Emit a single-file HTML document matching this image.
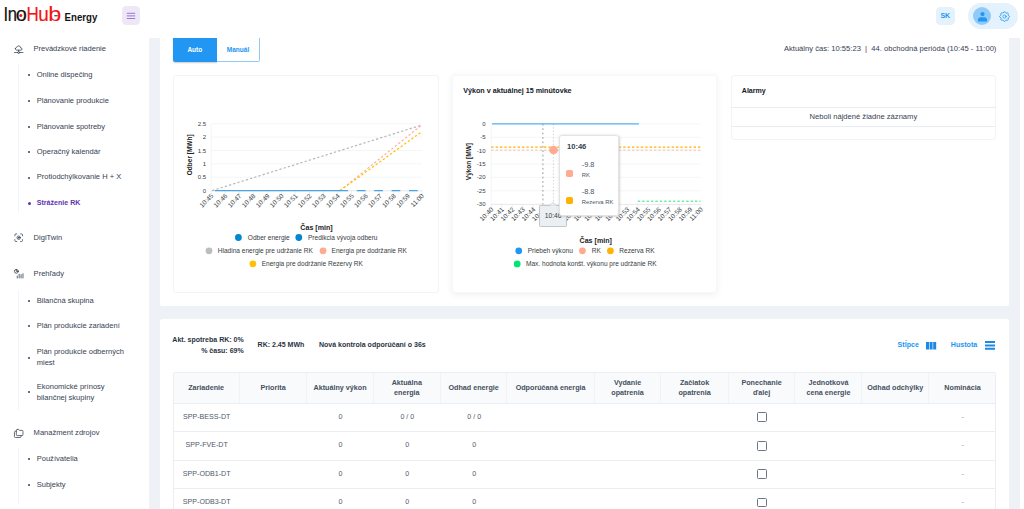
<!DOCTYPE html>
<html lang="sk">
<head>
<meta charset="utf-8">
<title>InoHub Energy</title>
<style>
*{box-sizing:border-box;margin:0;padding:0}
html,body{width:1024px;height:509px;overflow:hidden;background:#fff}
body{font-family:"Liberation Sans",sans-serif;color:#364152;position:relative;font-size:7.5px}
.abs{position:absolute}
.t{position:absolute;white-space:nowrap;line-height:10px;transform:translateY(-50%)}
#main{position:absolute;left:148.6px;top:38px;width:871.7px;height:471px;background:#eef2f6}
.card{position:absolute;background:#fff}
.side .t{font-size:7.55px;color:#364152}
.side .dot{position:absolute;width:2px;height:2px;border-radius:50%;background:#364152;left:28px}
.box{position:absolute;border:1px solid #f2f4f8;border-radius:3px;background:#fff}
svg{position:absolute;overflow:visible}
svg text{font-family:"Liberation Sans",sans-serif}
.th{position:absolute;top:0;height:29.8px;border-right:1px solid #f0f2f5;display:flex;align-items:center;justify-content:center;text-align:center;font-weight:bold;font-size:7.2px;line-height:10.4px;color:#465060}
.td{position:absolute;font-size:7.1px;color:#4f5969;transform:translate(-50%,-50%);white-space:nowrap}
.rowline{position:absolute;left:0;width:822.3px;height:1px;background:#eaeef2}
.cb{position:absolute;width:9.8px;height:9.9px;border:1.1px solid #6b7689;border-radius:1.4px;left:759.2px}
</style>
</head>
<body>
<!-- HEADER -->
<div id="header" class="abs" style="left:0;top:0;width:1024px;height:38px;background:#fff">
  <svg id="logo" width="110" height="32" style="left:0;top:0">
    <text transform="translate(3.46,21) scale(.8,1)" font-size="20.7" fill="#111" stroke="#111" stroke-width="0.2">I</text>
    <text transform="translate(7.71,21) scale(.8,1)" font-size="20.7" fill="#111" stroke="#111" stroke-width="0.2">n</text>
    <text transform="translate(15.78,21) scale(.96,1)" font-size="20.7" fill="#111" stroke="#111" stroke-width="0.2">o</text>
    <text transform="translate(26.54,21) scale(.817,1)" font-size="20.7" fill="#f41414" stroke="#f41414" stroke-width="0.2">H</text>
    <text transform="translate(38.2,21) scale(.91,1)" font-size="20.7" fill="#f41414" stroke="#f41414" stroke-width="0.2">u</text>
    <text transform="translate(48.3,21) scale(1.13,1)" font-size="20.7" fill="#f41414" stroke="#f41414" stroke-width="0.05">b</text>
    <circle cx="20.8" cy="15.6" r="1.5" fill="#f41414"/>
    <rect x="54.2" y="15.2" width="3.5" height="1.1" fill="#333"/>
    <text x="64.6" y="20.9" font-size="10.9" font-weight="bold" fill="#151515" textLength="32.8" lengthAdjust="spacingAndGlyphs">Energy</text>
  </svg>
  <div class="abs" style="left:121.6px;top:6.4px;width:18.6px;height:18.7px;border-radius:4.4px;background:#ede7f6"></div>
  <svg width="10" height="8" style="left:125.9px;top:12px" viewBox="0 0 10 8"><path d="M1.2 1.3h7.6M1.2 3.9h7.6M1.2 6.5h7.6" stroke="#6f48bb" stroke-width="0.68" fill="none" stroke-linecap="round"/></svg>
  <div class="abs" style="left:936px;top:6.9px;width:18.6px;height:18.4px;border-radius:4.4px;background:#e3f2fd"></div>
  <div class="t" style="left:945.3px;top:16.2px;transform:translate(-50%,-50%);font-size:7px;font-weight:bold;color:#2196f3">SK</div>
  <div class="abs" style="left:967.9px;top:2.9px;width:50.1px;height:26.4px;border-radius:13.2px;background:#e3f2fd"></div>
  <div class="abs" style="left:972.9px;top:7.1px;width:18.2px;height:18.2px;border-radius:50%;background:#90caf9"></div>
  <svg width="13" height="13" style="left:975.5px;top:9.6px" viewBox="0 0 24 24"><circle cx="12" cy="7.6" r="3.9" fill="#2196f3"/><path d="M3.6 21.2v-2.600c0-2.800 2.200-5 5-5h6.800c2.800 0 5 2.200 5 5v2.600z" fill="#2196f3"/></svg>
  <svg width="13.1" height="13.1" style="left:997.85px;top:9.65px" viewBox="0 0 24 24" fill="none" stroke="#2196f3" stroke-width="1.5" stroke-linecap="round" stroke-linejoin="round"><path d="M10.325 4.317c.426 -1.756 2.924 -1.756 3.35 0a1.724 1.724 0 0 0 2.573 1.066c1.543 -.94 3.31 .826 2.37 2.37a1.724 1.724 0 0 0 1.065 2.572c1.756 .426 1.756 2.924 0 3.35a1.724 1.724 0 0 0 -1.066 2.573c.94 1.543 -.826 3.31 -2.37 2.37a1.724 1.724 0 0 0 -2.572 1.065c-.426 1.756 -2.924 1.756 -3.35 0a1.724 1.724 0 0 0 -2.573 -1.066c-1.543 .94 -3.31 -.826 -2.37 -2.37a1.724 1.724 0 0 0 -1.065 -2.572c-1.756 -.426 -1.756 -2.924 0 -3.35a1.724 1.724 0 0 0 1.066 -2.573c-.94 -1.543 .826 -3.31 2.37 -2.37c1 .608 2.296 .07 2.572 -1.065z"/><circle cx="12" cy="12" r="3"/></svg>
</div>

<!-- SIDEBAR -->
<div id="sidebar" class="abs side" style="left:0;top:38px;width:148.6px;height:471px;background:#fff">
  <div class="abs" style="left:18.3px;top:25.8px;width:1px;height:149.7px;background:#f0f5fc"></div>
  <div class="abs" style="left:18.3px;top:251.8px;width:1px;height:119.8px;background:#f0f5fc"></div>
  <div class="abs" style="left:18.3px;top:409.9px;width:1px;height:56px;background:#f0f5fc"></div>
  <svg width="11.4" height="11.4" style="left:13.1px;top:5.7px" viewBox="0 0 24 24" fill="none" stroke="#364152" stroke-width="1.6" stroke-linecap="round" stroke-linejoin="round"><path d="M5 9.897c0 -1.714 1.460 -3.104 3.260 -3.104c.275 -1.220 1.255 -2.215 2.572 -2.611c1.317 -.397 2.770 -.134 3.811 .690c1.042 .822 1.514 2.080 1.239 3.300h.693a2.420 2.420 0 0 1 2.425 2.414a2.420 2.420 0 0 1 -2.425 2.414h-8.315c-1.800 0 -3.260 -1.390 -3.260 -3.103z"/><path d="M12 13v3"/><circle cx="12" cy="18" r="2"/><path d="M14 18h7"/><path d="M3 18h7"/></svg>
  <div class="t" style="left:33.4px;top:10.7px">Prevádzkové riadenie</div>
  <div class="dot" style="top:36px"></div><div class="t" style="left:36.7px;top:36.8px">Online dispečing</div>
  <div class="dot" style="top:62px"></div><div class="t" style="left:36.7px;top:62.8px">Plánovanie produkcie</div>
  <div class="dot" style="top:87.8px"></div><div class="t" style="left:36.7px;top:88.6px">Plánovanie spotreby</div>
  <div class="dot" style="top:112.9px"></div><div class="t" style="left:36.7px;top:113.7px">Operačný kalendár</div>
  <div class="dot" style="top:138.6px"></div><div class="t" style="left:36.7px;top:139.4px">Protiodchýlkovanie H + X</div>
  <div class="dot" style="top:163.8px;left:27.5px;width:3px;height:3px;background:#5e35b1"></div><div class="t" style="left:36.7px;top:165.1px;color:#5e35b1;font-weight:bold;font-size:7.1px">Stráženie RK</div>
  <svg width="11.4" height="11.4" style="left:13.1px;top:194.4px" viewBox="0 0 24 24" fill="none" stroke="#364152" stroke-width="1.6" stroke-linecap="round" stroke-linejoin="round"><path d="M4 8v-2a2 2 0 0 1 2 -2h2"/><path d="M4 16v2a2 2 0 0 0 2 2h2"/><path d="M16 4h2a2 2 0 0 1 2 2v2"/><path d="M16 20h2a2 2 0 0 0 2 -2v-2"/><circle cx="12" cy="12" r="3.6"/><circle cx="12" cy="12" r="1" fill="#364152"/></svg>
  <div class="t" style="left:33.6px;top:199.8px">DigiTwin</div>
  <svg width="11.4" height="11.4" style="left:12.6px;top:230.2px" viewBox="0 0 24 24" fill="none" stroke="#364152" stroke-width="1.7" stroke-linecap="round" stroke-linejoin="round"><circle cx="7" cy="7" r="4"/><path d="M7 3v4h4"/><path d="M9 17v4"/><path d="M17 14v7"/><path d="M13 13v8"/><path d="M21 12v9"/></svg>
  <div class="t" style="left:33.6px;top:236.2px">Prehľady</div>
  <div class="dot" style="top:262.1px"></div><div class="t" style="left:36.7px;top:262.9px">Bilančná skupina</div>
  <div class="dot" style="top:286.7px"></div><div class="t" style="left:36.7px;top:287.5px">Plán produkcie zariadení</div>
  <div class="dot" style="top:318.5px"></div><div class="t" style="left:36.7px;top:314.3px">Plán produkcie odberných</div><div class="t" style="left:36.7px;top:324.6px">miest</div>
  <div class="dot" style="top:353px"></div><div class="t" style="left:36.7px;top:348.9px">Ekonomické prínosy</div><div class="t" style="left:36.7px;top:359.6px">bilančnej skupiny</div>
  <svg width="11.4" height="11.4" style="left:13.4px;top:389.8px" viewBox="0 0 24 24" fill="none" stroke="#364152" stroke-width="1.6" stroke-linecap="round" stroke-linejoin="round"><path d="M9 3h3l2 2h5a2 2 0 0 1 2 2v7a2 2 0 0 1 -2 2h-10a2 2 0 0 1 -2 -2v-9a2 2 0 0 1 2 -2"/><path d="M17 16v2a2 2 0 0 1 -2 2h-10a2 2 0 0 1 -2 -2v-9a2 2 0 0 1 2 -2h2"/></svg>
  <div class="t" style="left:33.6px;top:395.4px">Manažment zdrojov</div>
  <div class="dot" style="top:420.4px"></div><div class="t" style="left:36.7px;top:421.2px">Používatelia</div>
  <div class="dot" style="top:446.1px"></div><div class="t" style="left:36.7px;top:446.9px">Subjekty</div>
</div>

<!-- MAIN -->
<div id="main">
  <div id="card1" class="card" style="left:11px;top:-6px;width:849.4px;height:273.7px;border-radius:2.6px"></div>
  <div id="card2" class="card" style="left:11px;top:280.9px;width:849.4px;height:200px;border-radius:2.6px"></div>
</div>
<div class="abs" style="left:173.2px;top:36px;width:43.6px;height:25.5px;background:#2196f3;border-radius:2.3px 0 0 2.3px;box-shadow:0 1px 1.6px rgba(0,0,0,.2)"></div>
<div class="abs" style="left:216.8px;top:36px;width:42.9px;height:25.5px;border:1px solid #90caf9;border-left:0;border-radius:0 2.3px 2.3px 0;background:#fff"></div>
<div class="abs" style="left:148.6px;top:30px;width:875.4px;height:8px;background:#fff"></div>
<div class="t" style="left:194.8px;top:49.6px;transform:translate(-50%,-50%);font-size:6.5px;font-weight:bold;color:#fff">Auto</div>
<div class="t" style="left:238px;top:49.6px;transform:translate(-50%,-50%);font-size:6.5px;font-weight:bold;color:#2196f3">Manuál</div>
<div class="t" style="left:783.9px;top:49.4px;font-size:7.61px;color:#364152">Aktuálny čas: 10:55:23 &nbsp;|&nbsp; 44. obchodná perióda (10:45 - 11:00)</div>

<div class="box" style="left:173px;top:74.5px;width:265.9px;height:218.8px"></div>
<svg width="1024" height="509" style="left:0;top:0" viewBox="0 0 1024 509">
<line x1="211.2" y1="190.6" x2="421.8" y2="190.6" stroke="#eceef0" stroke-width="0.6"/>
<text x="206.2" y="192.6" font-size="6.05" fill="#373d3f" text-anchor="end">0</text>
<line x1="211.2" y1="177.2" x2="421.8" y2="177.2" stroke="#eceef0" stroke-width="0.6"/>
<text x="206.2" y="179.2" font-size="6.05" fill="#373d3f" text-anchor="end">0.5</text>
<line x1="211.2" y1="163.8" x2="421.8" y2="163.8" stroke="#eceef0" stroke-width="0.6"/>
<text x="206.2" y="165.8" font-size="6.05" fill="#373d3f" text-anchor="end">1</text>
<line x1="211.2" y1="150.5" x2="421.8" y2="150.5" stroke="#eceef0" stroke-width="0.6"/>
<text x="206.2" y="152.5" font-size="6.05" fill="#373d3f" text-anchor="end">1.5</text>
<line x1="211.2" y1="137.1" x2="421.8" y2="137.1" stroke="#eceef0" stroke-width="0.6"/>
<text x="206.2" y="139.1" font-size="6.05" fill="#373d3f" text-anchor="end">2</text>
<line x1="211.2" y1="123.7" x2="421.8" y2="123.7" stroke="#eceef0" stroke-width="0.6"/>
<text x="206.2" y="125.7" font-size="6.05" fill="#373d3f" text-anchor="end">2.5</text>
<line x1="211.2" y1="123.7" x2="211.2" y2="190.6" stroke="#eceef0" stroke-width="0.6"/>
<line x1="211.2" y1="190.9" x2="421.8" y2="190.9" stroke="#e0e3e6" stroke-width="0.6"/>
<line x1="211.2" y1="190.9" x2="211.2" y2="194.0" stroke="#e0e3e6" stroke-width="0.6"/>
<text transform="translate(213.8,196.4) rotate(-45)" font-size="6.5" fill="#373d3f" text-anchor="end">10:45</text>
<line x1="225.2" y1="190.9" x2="225.2" y2="194.0" stroke="#e0e3e6" stroke-width="0.6"/>
<text transform="translate(227.8,196.4) rotate(-45)" font-size="6.5" fill="#373d3f" text-anchor="end">10:46</text>
<line x1="239.3" y1="190.9" x2="239.3" y2="194.0" stroke="#e0e3e6" stroke-width="0.6"/>
<text transform="translate(241.9,196.4) rotate(-45)" font-size="6.5" fill="#373d3f" text-anchor="end">10:47</text>
<line x1="253.3" y1="190.9" x2="253.3" y2="194.0" stroke="#e0e3e6" stroke-width="0.6"/>
<text transform="translate(255.9,196.4) rotate(-45)" font-size="6.5" fill="#373d3f" text-anchor="end">10:48</text>
<line x1="267.4" y1="190.9" x2="267.4" y2="194.0" stroke="#e0e3e6" stroke-width="0.6"/>
<text transform="translate(270.0,196.4) rotate(-45)" font-size="6.5" fill="#373d3f" text-anchor="end">10:49</text>
<line x1="281.4" y1="190.9" x2="281.4" y2="194.0" stroke="#e0e3e6" stroke-width="0.6"/>
<text transform="translate(284.0,196.4) rotate(-45)" font-size="6.5" fill="#373d3f" text-anchor="end">10:50</text>
<line x1="295.4" y1="190.9" x2="295.4" y2="194.0" stroke="#e0e3e6" stroke-width="0.6"/>
<text transform="translate(298.0,196.4) rotate(-45)" font-size="6.5" fill="#373d3f" text-anchor="end">10:51</text>
<line x1="309.5" y1="190.9" x2="309.5" y2="194.0" stroke="#e0e3e6" stroke-width="0.6"/>
<text transform="translate(312.1,196.4) rotate(-45)" font-size="6.5" fill="#373d3f" text-anchor="end">10:52</text>
<line x1="323.5" y1="190.9" x2="323.5" y2="194.0" stroke="#e0e3e6" stroke-width="0.6"/>
<text transform="translate(326.1,196.4) rotate(-45)" font-size="6.5" fill="#373d3f" text-anchor="end">10:53</text>
<line x1="337.6" y1="190.9" x2="337.6" y2="194.0" stroke="#e0e3e6" stroke-width="0.6"/>
<text transform="translate(340.2,196.4) rotate(-45)" font-size="6.5" fill="#373d3f" text-anchor="end">10:54</text>
<line x1="351.6" y1="190.9" x2="351.6" y2="194.0" stroke="#e0e3e6" stroke-width="0.6"/>
<text transform="translate(354.2,196.4) rotate(-45)" font-size="6.5" fill="#373d3f" text-anchor="end">10:55</text>
<line x1="365.6" y1="190.9" x2="365.6" y2="194.0" stroke="#e0e3e6" stroke-width="0.6"/>
<text transform="translate(368.2,196.4) rotate(-45)" font-size="6.5" fill="#373d3f" text-anchor="end">10:56</text>
<line x1="379.7" y1="190.9" x2="379.7" y2="194.0" stroke="#e0e3e6" stroke-width="0.6"/>
<text transform="translate(382.3,196.4) rotate(-45)" font-size="6.5" fill="#373d3f" text-anchor="end">10:57</text>
<line x1="393.7" y1="190.9" x2="393.7" y2="194.0" stroke="#e0e3e6" stroke-width="0.6"/>
<text transform="translate(396.3,196.4) rotate(-45)" font-size="6.5" fill="#373d3f" text-anchor="end">10:58</text>
<line x1="407.8" y1="190.9" x2="407.8" y2="194.0" stroke="#e0e3e6" stroke-width="0.6"/>
<text transform="translate(410.4,196.4) rotate(-45)" font-size="6.5" fill="#373d3f" text-anchor="end">10:59</text>
<line x1="421.8" y1="190.9" x2="421.8" y2="194.0" stroke="#e0e3e6" stroke-width="0.6"/>
<text transform="translate(424.4,196.4) rotate(-45)" font-size="6.5" fill="#373d3f" text-anchor="end">11:00</text>
<line x1="212.2" y1="190.6" x2="421.8" y2="125.0" stroke="#b4b4b4" stroke-width="1.15" stroke-dasharray="2.3 2.1"/>
<line x1="340.0" y1="190.6" x2="421.8" y2="125.0" stroke="#ffab91" stroke-width="1.15" stroke-dasharray="2.3 2.1"/>
<line x1="340.0" y1="190.6" x2="421.8" y2="131.7" stroke="#ffc107" stroke-width="1.25" stroke-dasharray="2.3 2.1"/>
<line x1="214.9" y1="190.6" x2="340.0" y2="190.6" stroke="#48a4e4" stroke-width="1.05"/>
<line x1="339.4" y1="190.6" x2="421.8" y2="190.6" stroke="#48a4e4" stroke-width="1.05" stroke-dasharray="8.7 8.7"/>
<text transform="translate(192,154.8) rotate(-90)" font-size="6.5" font-weight="bold" fill="#222" text-anchor="middle">Odber [MWh]</text>
<text x="316.5" y="230.2" font-size="7.1" font-weight="bold" fill="#222" text-anchor="middle">Čas [min]</text>
<circle cx="238.4" cy="237.5" r="3.4" fill="#0288d1"/>
<text x="247.8" y="239.8" font-size="6.56" fill="#373d3f">Odber energie</text>
<circle cx="298.8" cy="237.5" r="3.4" fill="#0288d1"/>
<text x="308" y="239.8" font-size="6.56" fill="#373d3f">Predikcia vývoja odberu</text>
<circle cx="209" cy="250.8" r="3.4" fill="#bdbdbd"/>
<text x="217.8" y="253.1" font-size="6.56" fill="#373d3f">Hladina energie pre udržanie RK</text>
<circle cx="323" cy="250.8" r="3.4" fill="#ffab91"/>
<text x="331.6" y="253.1" font-size="6.56" fill="#373d3f">Energia pre dodržanie RK</text>
<circle cx="252.9" cy="263.8" r="3.4" fill="#ffc107"/>
<text x="261.7" y="266.1" font-size="6.56" fill="#373d3f">Energia pre dodržanie Rezervy RK</text>
</svg>
<div class="box" style="left:452.3px;top:74.5px;width:264.7px;height:218.8px;border-color:#f6f7fa;box-shadow:0 1.5px 7px rgba(32,40,45,.065)"></div>
<div class="t" style="left:463.2px;top:90.6px;font-size:7.18px;font-weight:bold;color:#121926">Výkon v aktuálnej 15 minútovke</div>
<svg width="1024" height="509" style="left:0;top:0" viewBox="0 0 1024 509">
<line x1="491.2" y1="123.9" x2="700.6" y2="123.9" stroke="#eceef0" stroke-width="0.6"/>
<text x="485.6" y="125.9" font-size="6.05" fill="#373d3f" text-anchor="end">0</text>
<line x1="491.2" y1="137.3" x2="700.6" y2="137.3" stroke="#eceef0" stroke-width="0.6"/>
<text x="485.6" y="139.3" font-size="6.05" fill="#373d3f" text-anchor="end">-5</text>
<line x1="491.2" y1="150.7" x2="700.6" y2="150.7" stroke="#eceef0" stroke-width="0.6"/>
<text x="485.6" y="152.7" font-size="6.05" fill="#373d3f" text-anchor="end">-10</text>
<line x1="491.2" y1="164.0" x2="700.6" y2="164.0" stroke="#eceef0" stroke-width="0.6"/>
<text x="485.6" y="166.0" font-size="6.05" fill="#373d3f" text-anchor="end">-15</text>
<line x1="491.2" y1="177.4" x2="700.6" y2="177.4" stroke="#eceef0" stroke-width="0.6"/>
<text x="485.6" y="179.4" font-size="6.05" fill="#373d3f" text-anchor="end">-20</text>
<line x1="491.2" y1="190.8" x2="700.6" y2="190.8" stroke="#eceef0" stroke-width="0.6"/>
<text x="485.6" y="192.8" font-size="6.05" fill="#373d3f" text-anchor="end">-25</text>
<line x1="491.2" y1="204.2" x2="700.6" y2="204.2" stroke="#eceef0" stroke-width="0.6"/>
<text x="485.6" y="206.2" font-size="6.05" fill="#373d3f" text-anchor="end">-30</text>
<line x1="491.2" y1="123.9" x2="491.2" y2="204.2" stroke="#eceef0" stroke-width="0.6"/>
<line x1="491.2" y1="204.5" x2="700.6" y2="204.5" stroke="#e0e3e6" stroke-width="0.6"/>
<line x1="491.2" y1="204.5" x2="491.2" y2="207.6" stroke="#e0e3e6" stroke-width="0.6"/>
<text transform="translate(493.8,210.0) rotate(-45)" font-size="6.5" fill="#373d3f" text-anchor="end">10:40</text>
<line x1="501.7" y1="204.5" x2="501.7" y2="207.6" stroke="#e0e3e6" stroke-width="0.6"/>
<text transform="translate(504.3,210.0) rotate(-45)" font-size="6.5" fill="#373d3f" text-anchor="end">10:41</text>
<line x1="512.1" y1="204.5" x2="512.1" y2="207.6" stroke="#e0e3e6" stroke-width="0.6"/>
<text transform="translate(514.7,210.0) rotate(-45)" font-size="6.5" fill="#373d3f" text-anchor="end">10:42</text>
<line x1="522.6" y1="204.5" x2="522.6" y2="207.6" stroke="#e0e3e6" stroke-width="0.6"/>
<text transform="translate(525.2,210.0) rotate(-45)" font-size="6.5" fill="#373d3f" text-anchor="end">10:43</text>
<line x1="533.1" y1="204.5" x2="533.1" y2="207.6" stroke="#e0e3e6" stroke-width="0.6"/>
<text transform="translate(535.7,210.0) rotate(-45)" font-size="6.5" fill="#373d3f" text-anchor="end">10:44</text>
<line x1="543.5" y1="204.5" x2="543.5" y2="207.6" stroke="#e0e3e6" stroke-width="0.6"/>
<text transform="translate(546.1,210.0) rotate(-45)" font-size="6.5" fill="#373d3f" text-anchor="end">10:45</text>
<line x1="554.0" y1="204.5" x2="554.0" y2="207.6" stroke="#e0e3e6" stroke-width="0.6"/>
<text transform="translate(556.6,210.0) rotate(-45)" font-size="6.5" fill="#373d3f" text-anchor="end">10:46</text>
<line x1="564.5" y1="204.5" x2="564.5" y2="207.6" stroke="#e0e3e6" stroke-width="0.6"/>
<text transform="translate(567.1,210.0) rotate(-45)" font-size="6.5" fill="#373d3f" text-anchor="end">10:47</text>
<line x1="575.0" y1="204.5" x2="575.0" y2="207.6" stroke="#e0e3e6" stroke-width="0.6"/>
<text transform="translate(577.6,210.0) rotate(-45)" font-size="6.5" fill="#373d3f" text-anchor="end">10:48</text>
<line x1="585.4" y1="204.5" x2="585.4" y2="207.6" stroke="#e0e3e6" stroke-width="0.6"/>
<text transform="translate(588.0,210.0) rotate(-45)" font-size="6.5" fill="#373d3f" text-anchor="end">10:49</text>
<line x1="595.9" y1="204.5" x2="595.9" y2="207.6" stroke="#e0e3e6" stroke-width="0.6"/>
<text transform="translate(598.5,210.0) rotate(-45)" font-size="6.5" fill="#373d3f" text-anchor="end">10:50</text>
<line x1="606.4" y1="204.5" x2="606.4" y2="207.6" stroke="#e0e3e6" stroke-width="0.6"/>
<text transform="translate(609.0,210.0) rotate(-45)" font-size="6.5" fill="#373d3f" text-anchor="end">10:51</text>
<line x1="616.8" y1="204.5" x2="616.8" y2="207.6" stroke="#e0e3e6" stroke-width="0.6"/>
<text transform="translate(619.4,210.0) rotate(-45)" font-size="6.5" fill="#373d3f" text-anchor="end">10:52</text>
<line x1="627.3" y1="204.5" x2="627.3" y2="207.6" stroke="#e0e3e6" stroke-width="0.6"/>
<text transform="translate(629.9,210.0) rotate(-45)" font-size="6.5" fill="#373d3f" text-anchor="end">10:53</text>
<line x1="637.8" y1="204.5" x2="637.8" y2="207.6" stroke="#e0e3e6" stroke-width="0.6"/>
<text transform="translate(640.4,210.0) rotate(-45)" font-size="6.5" fill="#373d3f" text-anchor="end">10:54</text>
<line x1="648.2" y1="204.5" x2="648.2" y2="207.6" stroke="#e0e3e6" stroke-width="0.6"/>
<text transform="translate(650.9,210.0) rotate(-45)" font-size="6.5" fill="#373d3f" text-anchor="end">10:55</text>
<line x1="658.7" y1="204.5" x2="658.7" y2="207.6" stroke="#e0e3e6" stroke-width="0.6"/>
<text transform="translate(661.3,210.0) rotate(-45)" font-size="6.5" fill="#373d3f" text-anchor="end">10:56</text>
<line x1="669.2" y1="204.5" x2="669.2" y2="207.6" stroke="#e0e3e6" stroke-width="0.6"/>
<text transform="translate(671.8,210.0) rotate(-45)" font-size="6.5" fill="#373d3f" text-anchor="end">10:57</text>
<line x1="679.7" y1="204.5" x2="679.7" y2="207.6" stroke="#e0e3e6" stroke-width="0.6"/>
<text transform="translate(682.3,210.0) rotate(-45)" font-size="6.5" fill="#373d3f" text-anchor="end">10:58</text>
<line x1="690.1" y1="204.5" x2="690.1" y2="207.6" stroke="#e0e3e6" stroke-width="0.6"/>
<text transform="translate(692.7,210.0) rotate(-45)" font-size="6.5" fill="#373d3f" text-anchor="end">10:59</text>
<line x1="700.6" y1="204.5" x2="700.6" y2="207.6" stroke="#e0e3e6" stroke-width="0.6"/>
<text transform="translate(703.2,210.0) rotate(-45)" font-size="6.5" fill="#373d3f" text-anchor="end">11:00</text>
<line x1="542.9" y1="123.9" x2="542.9" y2="204.2" stroke="#8c8c8c" stroke-width="0.9" stroke-dasharray="1.7 2.7"/>
<line x1="553.4" y1="123.9" x2="553.4" y2="204.2" stroke="#c0c0c0" stroke-width="0.7" stroke-dasharray="1.4 1.9"/>
<line x1="491.2" y1="150.1" x2="700.6" y2="150.1" stroke="#ffb59e" stroke-width="0.95" stroke-dasharray="2.4 2"/>
<line x1="491.2" y1="147.2" x2="700.6" y2="147.2" stroke="#ffb300" stroke-width="1.2" stroke-dasharray="2.4 2"/>
<line x1="637.8" y1="201.2" x2="700.6" y2="201.2" stroke="#1ee884" stroke-width="1" stroke-dasharray="2.4 2"/>
<line x1="492.0" y1="123.9" x2="639" y2="123.9" stroke="#5aaff5" stroke-width="1.1"/>
<circle cx="553.5" cy="150.0" r="4.35" fill="#ffab91"/>
<text transform="translate(470.8,161.6) rotate(-90)" font-size="6.5" font-weight="bold" fill="#222" text-anchor="middle">Výkon [MW]</text>
<text x="595.7" y="242.9" font-size="7.1" font-weight="bold" fill="#222" text-anchor="middle">Čas [min]</text>
<circle cx="518.75" cy="250.8" r="3.4" fill="#2196f3"/>
<text x="527.7" y="253.1" font-size="6.56" fill="#373d3f">Priebeh výkonu</text>
<circle cx="582.4" cy="250.8" r="3.4" fill="#ffab91"/>
<text x="591.8" y="253.1" font-size="6.56" fill="#373d3f">RK</text>
<circle cx="610.4" cy="250.8" r="3.4" fill="#ffb300"/>
<text x="619.3" y="253.1" font-size="6.56" fill="#373d3f">Rezerva RK</text>
<circle cx="517.2" cy="263.9" r="3.4" fill="#00e676"/>
<text x="526" y="266.2" font-size="6.56" fill="#373d3f">Max. hodnota konšt. výkonu pre udržanie RK</text>
</svg>
<div class="abs" style="left:539.2px;top:205.4px;width:28px;height:21.2px;background:#eceff1;border:0.6px solid #bcc8ce;border-radius:1.2px"></div>
<svg width="8" height="4" style="left:549.4px;top:202.2px" viewBox="0 0 8 4"><path d="M0.4 3.8L4 0.4L7.6 3.8" fill="#eceff1" stroke="#bcc8ce" stroke-width="0.6"/></svg>
<div class="t" style="left:553.2px;top:215.6px;transform:translate(-50%,-50%);font-size:6.7px;color:#373d3f">10:46</div>
<div class="abs" style="left:559.3px;top:135.2px;width:60.1px;height:80.8px;background:rgba(255,255,255,.972);border:0.6px solid #e3e3e3;border-radius:2.7px;box-shadow:0.5px 0.5px 3px -1.2px #aaa"></div>
<div class="t" style="left:567px;top:147.2px;font-size:7.55px;font-weight:bold;color:#364152">10:46</div>
<div class="abs" style="left:566.1px;top:170.2px;width:6.9px;height:6.9px;border-radius:1.8px;background:#ffab91"></div>
<div class="t" style="left:581.8px;top:165.4px;font-size:7.35px;color:#4a5565">-9.8</div>
<div class="t" style="left:581.8px;top:175.4px;font-size:5.85px;color:#4a5565">RK</div>
<div class="abs" style="left:566.1px;top:197.4px;width:6.9px;height:6.9px;border-radius:1.8px;background:#ffb300"></div>
<div class="t" style="left:581.8px;top:191.8px;font-size:7.35px;color:#4a5565">-8.8</div>
<div class="t" style="left:581.8px;top:202.4px;font-size:5.85px;color:#4a5565">Rezerva RK</div>

<div class="box" style="left:730.6px;top:74.6px;width:265.6px;height:65px"></div>
<div class="t" style="left:741.8px;top:90.9px;font-size:7.05px;font-weight:bold;color:#121926">Alarmy</div>
<div class="abs" style="left:731.4px;top:107.3px;width:264.2px;height:0.7px;background:#e9edf2"></div>
<div class="abs" style="left:731.4px;top:126.3px;width:264.2px;height:0.7px;background:#e9edf2"></div>
<div class="t" style="left:863.4px;top:117.2px;transform:translate(-50%,-50%);font-size:7.6px;color:#364152">Neboli nájdené žiadne záznamy</div>

<div class="t" style="right:780.3px;top:339.7px;font-size:7.02px;font-weight:bold;color:#2a3342">Akt. spotreba RK: 0%</div>
<div class="t" style="right:780.3px;top:350.8px;font-size:7.02px;font-weight:bold;color:#2a3342">% času: 69%</div>
<div class="t" style="left:257.6px;top:345.2px;font-size:7.02px;font-weight:bold;color:#2a3342">RK: 2.45 MWh</div>
<div class="t" style="left:318.9px;top:345.2px;font-size:7.02px;font-weight:bold;color:#2a3342">Nová kontrola odporúčaní o 36s</div>
<div class="t" style="left:897.6px;top:345px;font-size:7.1px;font-weight:bold;color:#2196f3">Stĺpce</div>
<svg width="10.2" height="7.6" style="left:925.9px;top:342px" viewBox="0 0 10.2 7.6"><path d="M0 0h3v7.6h-3zM3.6 0h3v7.6h-3zM7.2 0h3v7.6h-3z" fill="#1e88e5"/></svg>
<div class="t" style="left:950.8px;top:345px;font-size:7.1px;font-weight:bold;color:#2196f3">Hustota</div>
<svg width="10" height="8.8" style="left:984.8px;top:341.4px" viewBox="0 0 10 8.8"><path d="M0 0h10v2h-10zM0 3.4h10v2h-10zM0 6.8h10v2h-10z" fill="#1e88e5"/></svg>

<div class="abs" id="table" style="left:173.2px;top:372.2px;width:822.9px;height:140px;border:1px solid #eaeef2;border-bottom:0;border-radius:2.3px 2.3px 0 0;overflow:hidden">
<div class="abs" style="left:0;top:0;width:822.9px;height:29.6px;background:#f8fafc"></div>
<div class="th" style="left:-1.0px;width:66.9px;">Zariadenie</div>
<div class="th" style="left:65.9px;width:67.1px;">Priorita</div>
<div class="th" style="left:133.0px;width:66.7px;">Aktuálny výkon</div>
<div class="th" style="left:199.7px;width:66.9px;">Aktuálna<br>energia</div>
<div class="th" style="left:266.6px;width:66.7px;">Odhad energie</div>
<div class="th" style="left:333.3px;width:87.2px;">Odporúčaná energia</div>
<div class="th" style="left:420.5px;width:66.7px;">Vydanie<br>opatrenia</div>
<div class="th" style="left:487.2px;width:67.4px;">Začiatok<br>opatrenia</div>
<div class="th" style="left:554.6px;width:66.6px;">Ponechanie<br>ďalej</div>
<div class="th" style="left:621.2px;width:67.1px;">Jednotková<br>cena energie</div>
<div class="th" style="left:688.3px;width:66.5px;">Odhad odchýlky</div>
<div class="th" style="left:754.8px;width:67.1px;border-right:0;">Nominácia</div>
<div class="rowline" style="top:29.6px"></div>
<div class="td" style="left:32.5px;top:43.9px">SPP-BESS-DT</div>
<div class="td" style="left:166.3px;top:43.9px">0</div>
<div class="td" style="left:233.1px;top:43.9px">0 / 0</div>
<div class="td" style="left:300.0px;top:43.9px">0 / 0</div>
<div class="cb" style="left:582.7px;top:39.2px"></div>
<div class="td" style="left:788.4px;top:43.9px;color:#8a94a3">-</div>
<div class="rowline" style="top:58.0px"></div>
<div class="td" style="left:32.5px;top:72.3px">SPP-FVE-DT</div>
<div class="td" style="left:166.3px;top:72.3px">0</div>
<div class="td" style="left:233.1px;top:72.3px">0</div>
<div class="td" style="left:300.0px;top:72.3px">0</div>
<div class="cb" style="left:582.7px;top:67.6px"></div>
<div class="td" style="left:788.4px;top:72.3px;color:#8a94a3">-</div>
<div class="rowline" style="top:86.4px"></div>
<div class="td" style="left:32.5px;top:100.7px">SPP-ODB1-DT</div>
<div class="td" style="left:166.3px;top:100.7px">0</div>
<div class="td" style="left:233.1px;top:100.7px">0</div>
<div class="td" style="left:300.0px;top:100.7px">0</div>
<div class="cb" style="left:582.7px;top:96.0px"></div>
<div class="td" style="left:788.4px;top:100.7px;color:#8a94a3">-</div>
<div class="rowline" style="top:114.8px"></div>
<div class="td" style="left:32.5px;top:129.1px">SPP-ODB3-DT</div>
<div class="td" style="left:166.3px;top:129.1px">0</div>
<div class="td" style="left:233.1px;top:129.1px">0</div>
<div class="td" style="left:300.0px;top:129.1px">0</div>
<div class="cb" style="left:582.7px;top:124.4px"></div>
<div class="td" style="left:788.4px;top:129.1px;color:#8a94a3">-</div>
</div>
</body>
</html>
